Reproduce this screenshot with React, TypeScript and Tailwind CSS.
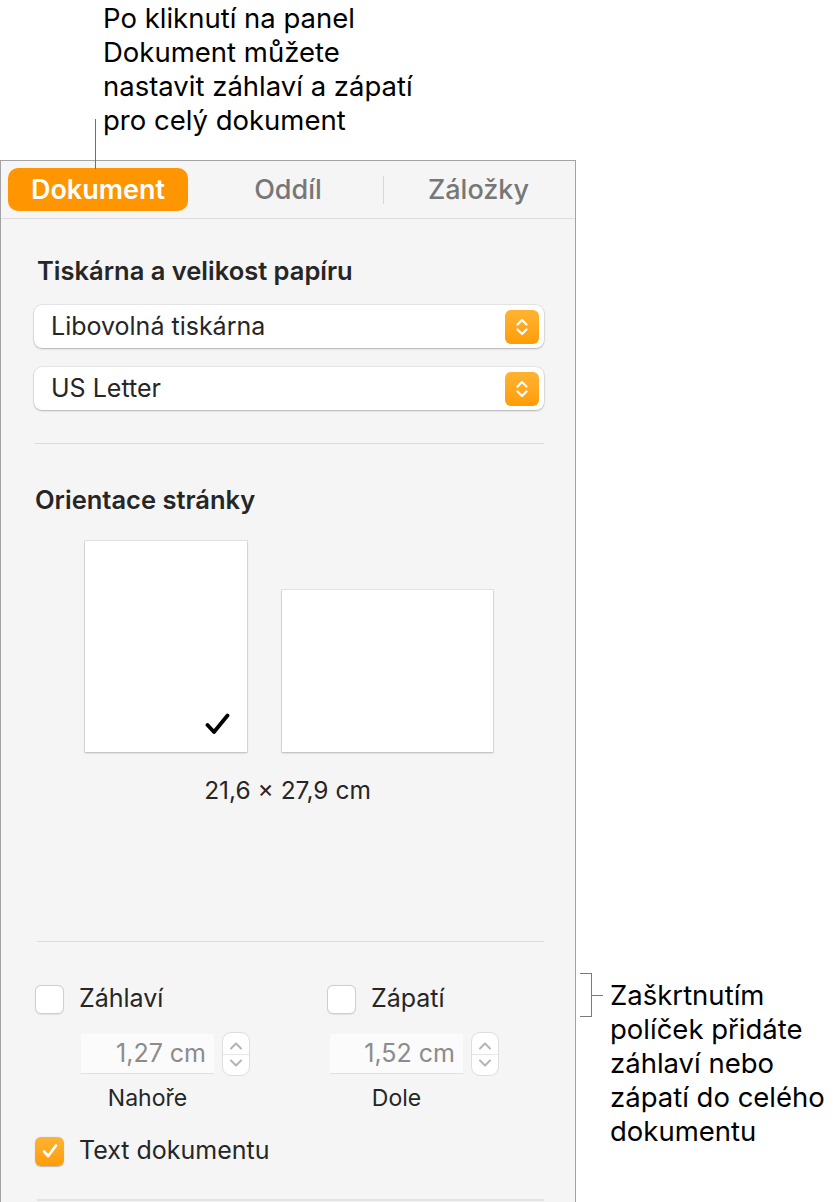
// Pages "Document" inspector panel with callout annotations

function Chevrons({ className }: { className?: string }) {
  return (
    <svg className={className} viewBox="0 0 16 24" fill="none" stroke="currentColor" strokeWidth="2.2" strokeLinecap="round" strokeLinejoin="round">
      <path d="M3.5 9.5 L8 5 L12.5 9.5" />
      <path d="M3.5 14.5 L8 19 L12.5 14.5" />
    </svg>
  );
}

function PopUp({ label }: { label: string }) {
  return (
    <div className="flex items-center justify-between h-[43px] rounded-[8px] bg-white pl-[17px] pr-[5px] shadow-[0_0_0_0.5px_rgba(0,0,0,0.12),0_1px_2px_rgba(0,0,0,0.22)]">
      <span className="text-[25px] text-[#262626]">{label}</span>
      <div className="flex items-center justify-center w-[34px] h-[34px] rounded-[6px] bg-gradient-to-b from-[#ffb331] to-[#ff9d00] text-white">
        <Chevrons className="w-[16px] h-[24px]" />
      </div>
    </div>
  );
}

function CheckBox({ checked }: { checked?: boolean }) {
  if (checked) {
    return (
      <div className="flex items-center justify-center w-[29px] h-[29px] rounded-[6px] bg-gradient-to-b from-[#ffb331] to-[#ff9d00] shadow-[0_0.5px_1px_rgba(0,0,0,0.25)]">
        <svg className="w-[20px] h-[20px]" viewBox="0 0 20 20" fill="none" stroke="white" strokeWidth="2.8" strokeLinecap="round" strokeLinejoin="round">
          <path d="M4 10.5 L8.2 15 L16 4.5" />
        </svg>
      </div>
    );
  }
  return <div className="w-[29px] h-[29px] rounded-[6px] bg-white border border-[#cfcfcf] shadow-[0_0.5px_1px_rgba(0,0,0,0.08)]" />;
}

function Stepper() {
  return (
    <div className="flex flex-col items-center justify-center w-[28px] h-[44px] rounded-[9px] bg-white border border-[#dedede] text-[#b4b4b4]">
      <svg className="w-[16px] h-[12px]" viewBox="0 0 16 12" fill="none" stroke="currentColor" strokeWidth="2" strokeLinecap="round" strokeLinejoin="round">
        <path d="M3 8.5 L8 3.5 L13 8.5" />
      </svg>
      <div className="w-full h-px bg-[#e6e6e6] my-[2px]" />
      <svg className="w-[16px] h-[12px]" viewBox="0 0 16 12" fill="none" stroke="currentColor" strokeWidth="2" strokeLinecap="round" strokeLinejoin="round">
        <path d="M3 3.5 L8 8.5 L13 3.5" />
      </svg>
    </div>
  );
}

function Measure({ value, label }: { value: string; label: string }) {
  return (
    <div className="flex flex-col items-start">
      <div className="flex items-center gap-[8px]">
        <div className="flex items-center justify-end w-[133px] h-[40px] bg-[#fbfbfb] border-b border-[#e0e0e0] pr-[8px] text-[25px] text-[#8c8c8c]">
          {value}
        </div>
        <Stepper />
      </div>
      <div className="w-[133px] mt-[9px] text-center text-[23px] leading-[26px] text-[#262626]">{label}</div>
    </div>
  );
}

export default function App() {
  return (
    <div className="relative w-[838px] h-[1202px] overflow-hidden bg-white font-['Inter',sans-serif] text-black">
      {/* top callout */}
      <div className="h-[160px] pl-[103px] pt-[1px] text-[27.5px] leading-[34px]">
        Po kliknutí na panel
        <br />
        Dokument můžete
        <br />
        nastavit záhlaví a zápatí
        <br />
        pro celý dokument
      </div>
      <div className="absolute left-[95px] top-[119px] w-px h-[50px] bg-[#6e6e6e]" />

      {/* inspector panel */}
      <div className="w-[576px] h-[1042px] bg-[#f5f5f5] border-l border-r border-t border-[#a3a3a3]">
        {/* tabs */}
        <div className="flex items-center h-[58px] pl-[2px] border-b border-[#dcdcdc]">
          <div className="flex justify-center w-[190px]">
            <div className="flex items-center justify-center w-[180px] h-[43px] rounded-[10px] bg-[#ff9500] text-white text-[27px] leading-[43px] font-semibold">
              Dokument
            </div>
          </div>
          <div className="w-[190px] text-center text-[27px] leading-[43px] font-medium text-[#777777]">Oddíl</div>
          <div className="w-px h-[28px] bg-[#d8d8d8]" />
          <div className="w-[189px] text-center text-[27px] leading-[43px] font-medium text-[#777777]">Záložky</div>
        </div>

        <div className="pl-[33px] pr-[31px]">
          <div className="pt-[38px] pl-[3px] text-[25.5px] leading-[28px] font-semibold text-[#262626]">Tiskárna a velikost papíru</div>
          <div className="mt-[20px] flex flex-col gap-[19px]">
            <PopUp label="Libovolná tiskárna" />
            <PopUp label="US Letter" />
          </div>
          <div className="mt-[33px] h-px bg-[#dcdcdc]" />

          <div className="mt-[42px] pl-[1px] text-[25.5px] leading-[28px] font-semibold text-[#262626]">Orientace stránky</div>
          <div className="mt-[27px] flex items-end justify-center gap-[35px]">
            <div className="relative w-[162px] h-[211px] bg-white shadow-[0_0_0_1px_rgba(0,0,0,0.07),0_1px_2px_rgba(0,0,0,0.2)]">
              <svg className="absolute right-[17px] bottom-[17px] w-[25px] h-[22px]" viewBox="0 0 25 22" fill="none" stroke="black" strokeWidth="3.8" strokeLinecap="round" strokeLinejoin="round">
                <path d="M2.5 12 L9 19 L22.5 2.5" />
              </svg>
            </div>
            <div className="w-[211px] h-[162px] bg-white shadow-[0_0_0_1px_rgba(0,0,0,0.07),0_1px_2px_rgba(0,0,0,0.2)]" />
          </div>
          <div className="mt-[24px] text-center text-[24.5px] leading-[28px] text-[#262626] pr-[3px]">21,6 × 27,9 cm</div>

          <div className="mt-[137px] h-px bg-[#dcdcdc] ml-[3px]" />

          <div className="mt-[42px] grid grid-cols-[293px_1fr]">
            <div className="flex flex-col">
              <div className="flex items-center gap-[15px] h-[30px] pl-[1px]">
                <CheckBox />
                <span className="text-[25px] text-[#262626]">Záhlaví</span>
              </div>
              <div className="mt-[18px] ml-[47px]">
                <Measure value="1,27 cm" label="Nahoře" />
              </div>
            </div>
            <div className="flex flex-col">
              <div className="flex items-center gap-[15px] h-[30px]">
                <CheckBox />
                <span className="text-[25px] text-[#262626]">Zápatí</span>
              </div>
              <div className="mt-[18px] ml-[3px]">
                <Measure value="1,52 cm" label="Dole" />
              </div>
            </div>
          </div>

          <div className="mt-[25px] flex items-center gap-[15px] h-[30px] pl-[1px]">
            <CheckBox checked />
            <span className="text-[25px] text-[#262626]">Text dokumentu</span>
          </div>
          <div className="mt-[33px] h-[2px] bg-[#e2e2e2] ml-[3px]" />
        </div>
      </div>

      {/* right callout */}
      <div className="absolute left-[580px] top-[973px] w-[12px] h-[44px] border-t border-r border-b border-[#7a7a7a]" />
      <div className="absolute left-[592px] top-[995px] w-[11px] h-px bg-[#7a7a7a]" />
      <div className="absolute left-[610px] top-[978px] text-[27.5px] leading-[34px]">
        Zaškrtnutím
        <br />
        políček přidáte
        <br />
        záhlaví nebo
        <br />
        zápatí do celého
        <br />
        dokumentu
      </div>
    </div>
  );
}
